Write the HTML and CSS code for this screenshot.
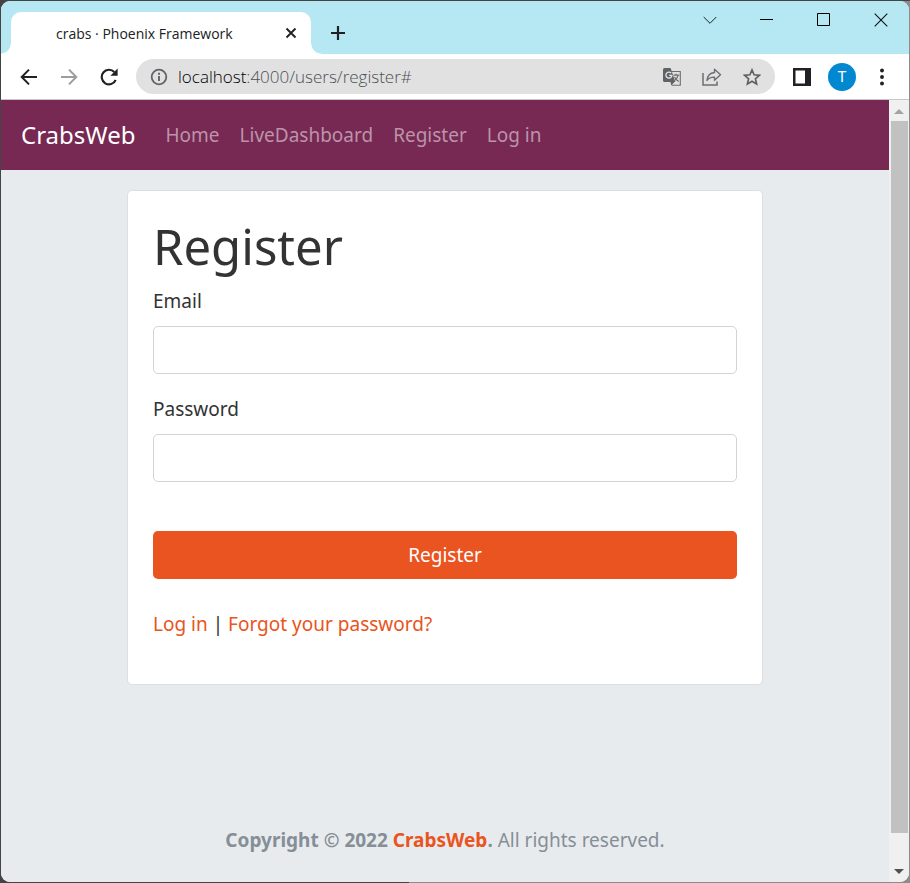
FILE: index.html
```
<!DOCTYPE html>
<html lang="en">
<head>
<meta charset="utf-8">
<meta name="viewport" content="width=device-width, initial-scale=1">
<title>crabs · Phoenix Framework</title>
<link rel="stylesheet" href="styles.css">
</head>
<body>
<div class="window">
  <header class="titlebar">
    <div class="tab">
      <span class="tab-title">crabs · Phoenix Framework</span>
      <button class="icon-btn tab-close" type="button" aria-label="Close tab">
        <svg width="12" height="12" viewBox="0 0 12 12"><path d="M1.5 1.5l9 9M10.5 1.5l-9 9" stroke="#202124" stroke-width="1.9" fill="none"/></svg>
      </button>
    </div>
    <button class="icon-btn new-tab" type="button" aria-label="New tab">
      <svg width="16" height="16" viewBox="0 0 16 16"><path d="M8 1v14M1 8h14" stroke="#202124" stroke-width="2.200" fill="none"/></svg>
    </button>
    <div class="controls">
      <button class="icon-btn" type="button" aria-label="Search tabs">
        <svg width="14" height="14" viewBox="0 0 14 14"><path d="M.7 4l6.3 6.3L13.3 4" stroke="#202124" fill="none"/></svg>
      </button>
      <button class="icon-btn" type="button" aria-label="Minimize">
        <svg width="13" height="13" viewBox="0 0 13 13"><path d="M0 6.500h13" stroke="#000" fill="none"/></svg>
      </button>
      <button class="icon-btn" type="button" aria-label="Maximize">
        <svg width="13" height="13" viewBox="0 0 13 13"><path d="M.5.5h12v12H.5z" stroke="#000" fill="none"/></svg>
      </button>
      <button class="icon-btn" type="button" aria-label="Close">
        <svg width="14" height="14" viewBox="0 0 14 14"><path d="M.7.7l12.600 12.600M13.300.7L.7 13.300" stroke="#111" stroke-width="1.100" fill="none"/></svg>
      </button>
    </div>
  </header>

  <div class="toolbar">
    <button class="icon-btn" type="button" aria-label="Back">
      <svg width="18" height="18" viewBox="0 0 18 18"><path d="M17 9H2M9 1.600L1.700 9 9 16.400" stroke="#202124" stroke-width="2" fill="none"/></svg>
    </button>
    <button class="icon-btn" type="button" aria-label="Forward">
      <svg width="18" height="18" viewBox="0 0 18 18"><path d="M1 9h15M9 1.600L16.300 9 9 16.400" stroke="#9d9d9d" stroke-width="2" fill="none"/></svg>
    </button>
    <button class="icon-btn" type="button" aria-label="Reload">
      <svg width="18" height="18" viewBox="0 0 18 18"><path d="M15.700 12A7.300 7.300 0 1 1 14.300 4" stroke="#202124" stroke-width="2.100" fill="none"/><path d="M17.600.6v7.200h-7.200z" fill="#202124"/></svg>
    </button>
    <div class="omnibox">
      <svg class="info" width="18" height="18" viewBox="0 0 18 18"><circle cx="9" cy="9" r="7.300" stroke="#5f6368" stroke-width="1.800" fill="none"/><path d="M9 8v5M9 4.800v2" stroke="#5f6368" stroke-width="1.900"/></svg>
      <span class="url"><span class="host">localhost</span>:4000/users/register#</span>
      <button class="icon-btn" type="button" aria-label="Translate">
        <svg width="18" height="18" viewBox="0 0 18 18"><path d="M8.500 3.500h8.800v13.800H8.800" stroke="#6b6d70" stroke-width="1.100" fill="none"/><path d="M1.500 0h6l1.200 3 3.600 11H1.500A1.500 1.500 0 0 1 0 12.500v-11A1.500 1.500 0 0 1 1.500 0z" fill="#5f6368"/><path d="M8.300 17.500l-.8-3.500h4z" fill="#5f6368"/><path d="M8.200 5.200A3 3 0 1 0 8.900 7.400H6.100" stroke="#e3e3e3" stroke-width="1.300" fill="none"/><path d="M10.500 7.200h5.800M13 5.700v1.500M15 7.200c-.3 2.200-1.600 3.900-3 5.100M11.500 9c.8 1.600 2.300 3.200 4.200 4.600" stroke="#6b6d70" stroke-width="1.200" fill="none"/></svg>
      </button>
      <button class="icon-btn" type="button" aria-label="Share">
        <svg width="20" height="18" viewBox="0 0 20 18"><path d="M1 5v12h14v-3.500" stroke="#6b6d70" stroke-width="1.500" fill="none"/><path d="M12.500 1.300l6 5.500-6 5.500V9.100C9 9 6.700 9.800 5 12.500 5.400 8 7.700 4.900 12.500 4.500z" stroke="#6b6d70" stroke-width="1.400" stroke-linejoin="round" fill="none"/></svg>
      </button>
      <button class="icon-btn" type="button" aria-label="Bookmark this tab">
        <svg width="18" height="18" viewBox="0 0 18 18"><path d="M9 1.900l2.100 4.900 5.300.5-4 3.500 1.200 5.200L9 13.200 4.400 16l1.200-5.200-4-3.500 5.300-.5z" stroke="#5f6368" stroke-width="1.700" fill="none"/></svg>
      </button>
    </div>
    <button class="icon-btn panel" type="button" aria-label="Side panel">
      <svg width="18" height="18" viewBox="0 0 18 18"><path fill-rule="evenodd" d="M0 0h18v18H0zM2.500 2.500v13H12v-13z" fill="#202124"/></svg>
    </button>
    <button class="icon-btn" type="button" aria-label="Profile"><span class="avatar">T</span></button>
    <button class="icon-btn" type="button" aria-label="Menu">
      <svg width="4" height="18" viewBox="0 0 4 18"><g fill="#202124"><circle cx="2" cy="2.500" r="1.950"/><circle cx="2" cy="9" r="1.950"/><circle cx="2" cy="15.500" r="1.950"/></g></svg>
    </button>
  </div>

  <div class="viewport">
    <div class="page">
      <nav class="navbar">
        <a class="brand" href="#">CrabsWeb</a>
        <a href="#">Home</a>
        <a href="#">LiveDashboard</a>
        <a href="#">Register</a>
        <a href="#">Log in</a>
      </nav>
      <main class="content">
        <section class="card">
          <h1>Register</h1>
          <form>
            <div class="field">
              <label for="email">Email</label>
              <input id="email" type="email">
            </div>
            <div class="field">
              <label for="password">Password</label>
              <input id="password" type="password">
            </div>
            <button class="submit" type="button">Register</button>
          </form>
          <p class="links"><a href="#">Log in</a> | <a href="#">Forgot your password?</a></p>
        </section>
      </main>
      <footer class="footer"><strong>Copyright © 2022 <a href="#">CrabsWeb</a>.</strong> All rights reserved.</footer>
    </div>
    <div class="scrollbar">
      <svg width="16" height="21" viewBox="0 0 16 21"><path d="M3 14l5-5 5 5z" fill="#a3a3a3"/></svg>
      <div class="thumb"></div>
      <svg width="16" height="21" viewBox="0 0 16 21"><path d="M3 8l5 5 5-5z" fill="#505050"/></svg>
    </div>
  </div>
</div>
</body>
</html>
```

FILE: styles.css
```
* {
  box-sizing: border-box;
}

body {
  margin: 0;
  min-height: 100vh;
  padding: 1px;
  display: flex;
  background:
    linear-gradient(#444, #444) top / 100% 1px no-repeat,
    linear-gradient(to right, #444 45%, #8c8c8c 45%);
  font-family: "Noto Sans", sans-serif;
}

a {
  color: #e95420;
  text-decoration: none;
}

svg {
  display: block;
  flex: none;
}

.window {
  flex: 1;
  min-width: 0;
  display: flex;
  flex-direction: column;
  border-radius: 9px;
  overflow: hidden;
  background: #fff;
}

.icon-btn {
  flex: none;
  width: 40px;
  padding: 0;
  border: 0;
  background: none;
  display: flex;
  align-items: center;
  justify-content: center;
}

/* Tab strip */
.titlebar {
  height: 53px;
  padding-left: 10px;
  display: flex;
  align-items: flex-end;
  background: #b5e8f3;
  font-family: "Open Sans", sans-serif;
}

.tab {
  position: relative;
  width: 300px;
  height: 42px;
  padding-left: 45px;
  display: flex;
  align-items: center;
  justify-content: space-between;
  background: #fff;
  border-radius: 10px 10px 0 0;
  color: #202124;
  font-size: 14px;
}

.tab::before,
.tab::after {
  content: "";
  position: absolute;
  bottom: 0;
  width: 10px;
  height: 10px;
}

.tab::before {
  right: 100%;
  background: radial-gradient(circle at 0 0, transparent 9px, #fff 10px);
}

.tab::after {
  left: 100%;
  background: radial-gradient(circle at 100% 0, transparent 9px, #fff 10px);
}

.new-tab {
  height: 42px;
  margin-left: 7px;
}

.controls {
  margin-left: auto;
  align-self: flex-start;
  display: flex;
}

.controls .icon-btn {
  width: 57px;
  height: 37px;
}

/* Address bar */
.toolbar {
  height: 46px;
  padding: 0 7px 0 8px;
  display: flex;
  align-items: center;
  border-bottom: 1px solid #c8c8cc;
  font-family: "Open Sans", sans-serif;
}

.omnibox {
  flex: 1;
  min-width: 0;
  height: 35px;
  margin-left: 7px;
  padding: 0 3px 0 14px;
  display: flex;
  align-items: center;
  border-radius: 18px;
  background: #e1e1e1;
}

.url {
  flex: 1;
  min-width: 0;
  margin-left: 10px;
  color: #4c5054;
  font-size: 17px;
  font-weight: 300;
  white-space: nowrap;
}

.host {
  color: #000;
}

.panel {
  margin-left: 7px;
}

.avatar {
  width: 28px;
  height: 28px;
  border-radius: 50%;
  background: #0288d1;
  color: #fff;
  font: 15px/28px Roboto, sans-serif;
}

/* Page area */
.viewport {
  flex: 1;
  display: flex;
}

.page {
  flex: 1;
  min-width: 0;
  display: flex;
  flex-direction: column;
  background: #e7ebee;
  color: #333;
  font-size: 19px;
  line-height: 30px;
}

.navbar {
  padding: 20px;
  display: flex;
  align-items: center;
  gap: 20px;
  background: #772953;
}

.navbar a {
  color: #bb94a9;
}

.navbar .brand {
  margin-right: 10px;
  color: #fff;
  font-size: 24px;
}

.content {
  padding: 20px;
}

.card {
  width: 75%;
  margin: 0 auto;
  padding: 25px 25px 45px;
  border: 1px solid #dcdfe1;
  border-radius: 5px;
  background: #fff;
}

h1 {
  margin: 0 0 10px;
  font-size: 49px;
  font-weight: 400;
  line-height: 60px;
}

.field {
  margin-bottom: 20px;
}

.field label {
  display: block;
  margin-bottom: 10px;
}

.field input {
  display: block;
  width: 100%;
  height: 48px;
  padding: 8px 15px;
  border: 1px solid #ced4da;
  border-radius: 5px;
  background: #fff;
  font: inherit;
}

.submit {
  display: block;
  width: 100%;
  height: 48px;
  margin-top: 49px;
  border: 0;
  border-radius: 5px;
  background: #e95420;
  color: #fff;
  font: inherit;
}

.links {
  margin: 30px 0 0;
}

.footer {
  margin-top: auto;
  padding: 0 20px 27px;
  color: #868e96;
  text-align: center;
}

/* Scrollbar */
.scrollbar {
  width: 20px;
  padding: 0 1px 0 2px;
  display: flex;
  flex-direction: column;
  background: #f0f0f0;
}

.thumb {
  flex: none;
  height: 91%;
  background: #c1c1c1;
}

.scrollbar svg:last-child {
  margin-top: auto;
}
```
